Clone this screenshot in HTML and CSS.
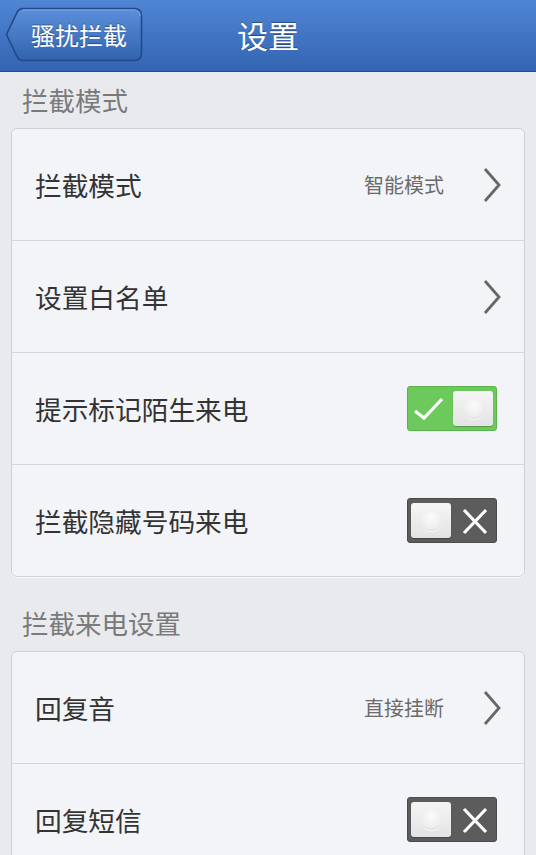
FILE: index.html
```html
<!DOCTYPE html>
<html lang="zh-CN">

<head>
  <meta charset="UTF-8">
  <meta name="viewport" content="width=device-width, initial-scale=1.0">
  <title>设置</title>
  <link rel="stylesheet" href="styles.css">
</head>

<body>
  <header class="nav-bar">
    <a class="back-btn" href="#">
      <svg class="back-shape" width="138" height="55" viewBox="0 0 138 55">
        <defs>
          <linearGradient id="backFill" x1="0" y1="0" x2="0" y2="1">
            <stop offset="0" stop-color="#5b90da" />
            <stop offset="1" stop-color="#3262ae" />
          </linearGradient>
        </defs>
        <path d="M18 1.5 L129 1.5 Q136.5 1.5 136.5 9 L136.5 46 Q136.5 53.5 129 53.5 L18 53.5 Q14.5 53.5 12.5 50.5 L1.5 27.5 L12.5 4.5 Q14.5 1.5 18 1.5 Z"
          fill="url(#backFill)" stroke="#24488a" stroke-width="1.6" />
        <path d="M18 3 L129 3 Q135 3 135 9" fill="none" stroke="#7ba6e4" stroke-width="1" />
      </svg>
      <span class="back-label">骚扰拦截</span>
    </a>
    <h1 class="nav-title">设置</h1>
  </header>

  <section class="group">
    <h2 class="group-title">拦截模式</h2>
    <ul class="card">
      <li class="row">
        <span class="row-label">拦截模式</span>
        <span class="row-value">智能模式</span>
        <svg class="chevron" width="20" height="36" viewBox="0 0 20 36"><path d="M3 2 L17 18 L3 34" /></svg>
      </li>
      <li class="row">
        <span class="row-label">设置白名单</span>
        <svg class="chevron" width="20" height="36" viewBox="0 0 20 36"><path d="M3 2 L17 18 L3 34" /></svg>
      </li>
      <li class="row">
        <span class="row-label">提示标记陌生来电</span>
        <span class="switch on">
          <svg class="switch-mark" width="36" height="43" viewBox="0 0 36 43"><path d="M4 24 L13 31 L31 12" /></svg>
          <span class="knob"></span>
        </span>
      </li>
      <li class="row">
        <span class="row-label">拦截隐藏号码来电</span>
        <span class="switch off">
          <span class="knob"></span>
          <svg class="switch-mark" width="36" height="43" viewBox="0 0 36 43"><path d="M7 11 L29 34 M29 11 L7 34" /></svg>
        </span>
      </li>
    </ul>
  </section>

  <section class="group">
    <h2 class="group-title">拦截来电设置</h2>
    <ul class="card">
      <li class="row">
        <span class="row-label">回复音</span>
        <span class="row-value">直接挂断</span>
        <svg class="chevron" width="20" height="36" viewBox="0 0 20 36"><path d="M3 2 L17 18 L3 34" /></svg>
      </li>
      <li class="row">
        <span class="row-label">回复短信</span>
        <span class="switch off">
          <span class="knob"></span>
          <svg class="switch-mark" width="36" height="43" viewBox="0 0 36 43"><path d="M7 11 L29 34 M29 11 L7 34" /></svg>
        </span>
      </li>
    </ul>
  </section>
</body>

</html>
```

FILE: styles.css
```css
html,
body {
  margin: 0;
  overflow: hidden;
}

body {
  background-color: #e9eaee;
  font-family: "Noto Sans CJK SC", "Noto Sans", sans-serif;
  color: #333;
}

.nav-bar {
  display: grid;
  grid-template-columns: 1fr auto 1fr;
  height: 72px;
  box-sizing: border-box;
  background: linear-gradient(#4f86d5, #3364b1);
  border-bottom: 1px solid #24498a;
}

.back-btn {
  position: relative;
  display: flex;
  align-items: center;
  width: 138px;
  height: 55px;
  margin: 7px 0 0 5px;
  padding-left: 26px;
  box-sizing: border-box;
  text-decoration: none;
}

.back-shape {
  position: absolute;
  left: 0;
  top: 0;
}

.back-label {
  position: relative;
  color: #fff;
  font-size: 24px;
  line-height: 1;
  text-shadow: 0 -1px 0 rgba(0, 0, 0, 0.35);
}

.nav-title {
  grid-column: 2;
  margin: 0;
  font-size: 31px;
  font-weight: normal;
  line-height: 70px;
  color: #fff;
  text-shadow: 0 -1px 0 rgba(0, 0, 0, 0.35);
}

.group-title {
  margin: 0;
  height: 56px;
  padding-left: 22px;
  font-size: 26.5px;
  font-weight: normal;
  line-height: 56px;
  color: #7a7a7a;
}

.card {
  list-style: none;
  margin: 0 11px 18px;
  padding: 0;
  background-color: #f3f4f8;
  border: 1px solid #cfd0d5;
  border-radius: 6px;
  box-shadow: 0 1px 0 #fafafa;
}

.row {
  display: flex;
  align-items: center;
  height: 111px;
  padding: 0 22px 0 23px;
}

.row + .row {
  border-top: 1px solid #d5d6da;
}

.row-label {
  flex: 1;
  font-size: 26.7px;
  color: #333;
}

.row-value {
  margin-right: 38px;
  font-size: 20px;
  color: #6b6b6b;
}

.chevron path {
  fill: none;
  stroke: #676767;
  stroke-width: 2.8;
}

.switch {
  display: flex;
  align-items: center;
  justify-content: space-between;
  width: 90px;
  height: 45px;
  margin-right: 5px;
  padding: 0 3px;
  box-sizing: border-box;
  border-radius: 3px;
}

.switch.on {
  background-color: #6cc95b;
  border: 1px solid #5bb14c;
}

.switch.off {
  background-color: #5c5c5c;
  border: 1px solid #4b4b4b;
}

.switch-mark path {
  fill: none;
  stroke: #fff;
  stroke-width: 3.2;
}

.knob {
  display: flex;
  align-items: center;
  justify-content: center;
  width: 40px;
  height: 35px;
  border-radius: 3px;
  background: linear-gradient(#f5f5f6, #e3e3e5);
  box-shadow: 0 1px 1px rgba(0, 0, 0, 0.25);
}

.knob::before {
  content: "";
  width: 21px;
  height: 21px;
  border-radius: 50%;
  background: radial-gradient(circle at 50% 35%, #fbfbfb, #e6e6e8);
  box-shadow: inset 0 -1px 1px rgba(0, 0, 0, 0.06), 0 1px 1px rgba(255, 255, 255, 0.8);
}
```
